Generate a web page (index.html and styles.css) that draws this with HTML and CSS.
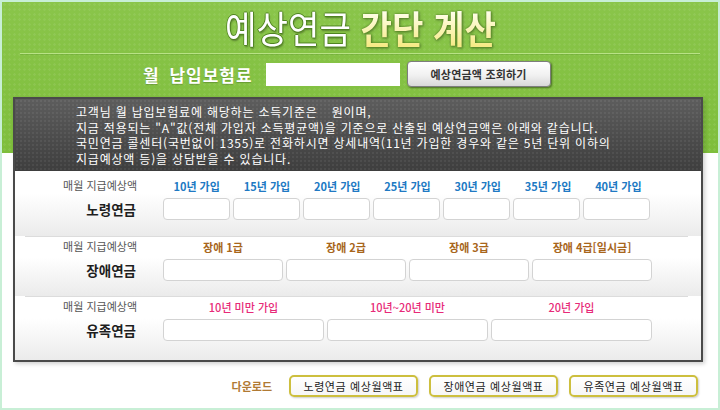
FILE: index.html
```html
<!DOCTYPE html>
<html lang="ko">
<head>
<meta charset="utf-8">
<title>예상연금 간단 계산</title>
<link rel="stylesheet" href="styles.css">
</head>
<body>
<div class="page">
  <h1 class="title"><span class="title-text"><span class="t1">예상연금</span> <span class="t2">간단 계산</span></span></h1>
  <div class="sep"></div>
  <div class="form">
    <span class="form-label">월 납입보험료</span>
    <input class="form-input" type="text">
    <button class="btn-query" type="button">예상연금액 조회하기</button>
  </div>
  <div class="panel">
    <div class="notice">
      <p>고객님 월 납입보험료에 해당하는 소득기준은 <span class="blank"></span>원이며,</p>
      <p>지금 적용되는 "A"값(전체 가입자 소득평균액)을 기준으로 산출된 예상연금액은 아래와 같습니다.</p>
      <p>국민연금 콜센터(국번없이 1355)로 전화하시면 상세내역(11년 가입한 경우와 같은 5년 단위 이하의</p>
      <p>지급예상액 등)을 상담받을 수 있습니다.</p>
    </div>
    <div class="row row-first">
      <div class="row-inner">
        <div class="lbl-top">매월 지급예상액</div>
        <div class="heads heads-blue">
          <span>10년 가입</span><span>15년 가입</span><span>20년 가입</span><span>25년 가입</span><span>30년 가입</span><span>35년 가입</span><span>40년 가입</span>
        </div>
        <div class="lbl-name">노령연금</div>
        <div class="boxes cols7">
          <span class="box"></span><span class="box"></span><span class="box"></span><span class="box"></span><span class="box"></span><span class="box"></span><span class="box"></span>
        </div>
      </div>
    </div>
    <div class="row">
      <div class="row-inner line">
        <div class="lbl-top">매월 지급예상액</div>
        <div class="heads heads-brown">
          <span>장애 1급</span><span>장애 2급</span><span>장애 3급</span><span>장애 4급[일시금]</span>
        </div>
        <div class="lbl-name">장애연금</div>
        <div class="boxes cols4">
          <span class="box"></span><span class="box"></span><span class="box"></span><span class="box"></span>
        </div>
      </div>
    </div>
    <div class="row row-last">
      <div class="row-inner line">
        <div class="lbl-top">매월 지급예상액</div>
        <div class="heads heads-pink">
          <span>10년 미만 가입</span><span>10년~20년 미만</span><span>20년 가입</span>
        </div>
        <div class="lbl-name">유족연금</div>
        <div class="boxes cols3">
          <span class="box"></span><span class="box"></span><span class="box"></span>
        </div>
      </div>
    </div>
  </div>
  <div class="downloads">
    <span class="dl-label">다운로드</span>
    <button class="btn-dl" type="button">노령연금 예상월액표</button>
    <button class="btn-dl" type="button">장애연금 예상월액표</button>
    <button class="btn-dl" type="button">유족연금 예상월액표</button>
  </div>
</div>
</body>
</html>
```
FILE: styles.css
```css
* { box-sizing: border-box; }
html, body { margin: 0; padding: 0; }
body {
  width: 720px;
  height: 410px;
  overflow: hidden;
  font-family: "Noto Sans CJK KR", "Noto Sans", sans-serif;
  background: #fff;
}
.page {
  width: 720px;
  height: 410px;
  border: 2px solid #c8efd6;
  background:
    radial-gradient(circle, rgba(255,255,255,0.07) 1px, transparent 1.5px) 0 0 / 5px 5px,
    linear-gradient(#8ac54a 0, #7ebe3c 151px, #ffffff 151px, #ffffff 100%);
}
.title {
  margin: 3px 0 0;
  height: 44px;
  line-height: 44px;
  text-align: center;
  font-size: 38px;
  font-weight: 400;
}
.title-text {
  display: inline-block;
  transform: scaleX(0.9);
}
.t1 {
  color: #ffffff;
  text-shadow: 1px 0 0 #4f8420, -1px 0 0 #4f8420, 0 1px 0 #4f8420, 0 -1px 0 #4f8420, 1px 2px 2px rgba(0,0,0,0.35);
}
.t2 {
  font-weight: 700;
  background: linear-gradient(#ffffef 20%, #f6ea86 85%);
  -webkit-background-clip: text;
  background-clip: text;
  color: transparent;
  filter: drop-shadow(0 0 1px #4b7d1c) drop-shadow(1px 1px 1px rgba(0,0,0,0.3));
}
.sep {
  margin: 4px 18px 0 18px;
  height: 2px;
  border-top: 1px solid rgba(190, 230, 140, 0.9);
  border-bottom: 1px solid rgba(90, 150, 40, 0.35);
}
.form {
  display: flex;
  align-items: center;
  margin: 6px 0 0 141px;
  height: 26px;
}
.form-label {
  color: #fff;
  font-size: 17px;
  font-weight: 700;
  letter-spacing: 1px;
  word-spacing: 4px;
  text-shadow: 0 1px 1px rgba(0,0,0,0.2);
}
.form-input {
  margin-left: 13px;
  width: 134px;
  height: 23px;
  border: 0;
  background: #fff;
  padding: 0;
}
.btn-query {
  margin-left: 7px;
  width: 144px;
  height: 26px;
  border: 1px solid #7d7d7d;
  border-radius: 4px;
  background: linear-gradient(#ffffff, #f1f1f1 55%, #d8d8d8);
  box-shadow: 1px 1px 2px rgba(0,0,0,0.45);
  font-family: inherit;
  font-size: 11px;
  font-weight: 700;
  letter-spacing: 0.2px;
  color: #333;
  padding: 0;
}
.panel {
  margin: 10px 15px 0 11px;
  border: 2px solid #4a4a4a;
  box-shadow: 2px 2px 4px rgba(0,0,0,0.18);
  background: #f0f0f0;
}
.notice {
  height: 72px;
  padding: 5px 0 5px 61px;
  background:
    radial-gradient(circle, rgba(255,255,255,0.06) 1px, transparent 1.5px) 0 0 / 4px 4px,
    linear-gradient(#5d5d5d, #4a4a4a 60%, #3e3e3e);
  color: #fff;
  font-size: 12px;
  letter-spacing: 0.8px;
  line-height: 15.5px;
}
.notice p { margin: 0; white-space: nowrap; }
.blank { display: inline-block; width: 10px; }
.row {
  background: linear-gradient(#ffffff 35%, #ebebeb);
}
.row-inner {
  margin: 0 13px 0 10px;
  display: grid;
  grid-template-columns: 138px 489px;
  grid-template-rows: 17px 22px;
  row-gap: 3px;
  padding: 2px 0 15px;
}
.row-first .row-inner { padding-top: 7px; padding-bottom: 16px; }
.row-last .row-inner { padding-bottom: 19px; }
.row-inner.line { border-top: 1px solid #dcdcdc; }
.lbl-top {
  text-align: right;
  padding-right: 26px;
  font-size: 11px;
  line-height: 15px;
  color: #555;
}
.lbl-name {
  text-align: right;
  padding-right: 27px;
  font-size: 13.5px;
  font-weight: 700;
  line-height: 22px;
  color: #1e1e1e;
}
.heads {
  display: grid;
  grid-auto-flow: column;
  grid-auto-columns: 1fr;
  column-gap: 3px;
  text-align: center;
  font-size: 11px;
  font-weight: 700;
  line-height: 17px;
}
.heads-blue { color: #2079c3; }
.heads-brown { color: #a8661c; }
.heads-pink { color: #e72a78; font-weight: 500; }
.boxes {
  display: grid;
  column-gap: 3px;
}
.cols7 { grid-template-columns: repeat(7, 1fr); width: 487px; }
.cols4 { grid-template-columns: repeat(4, 1fr); }
.cols3 { grid-template-columns: repeat(3, 1fr); }
.box {
  height: 22px;
  border: 1px solid #d3d3d3;
  border-radius: 4px;
  background: #fff;
}
.downloads {
  display: flex;
  justify-content: flex-end;
  align-items: center;
  margin-top: 13px;
  padding-right: 20px;
  gap: 11px;
}
.dl-label {
  font-size: 11px;
  font-weight: 700;
  color: #b07a34;
  margin-right: 6px;
}
.btn-dl {
  width: 129px;
  height: 22px;
  border: 2px solid #cdbf3e;
  border-radius: 5px;
  background: linear-gradient(#ffffff, #f6f6f6);
  box-shadow: 1px 1px 2px rgba(0,0,0,0.2);
  font-family: inherit;
  font-size: 11px;
  letter-spacing: 0.6px;
  color: #222;
  padding: 0;
}
```
